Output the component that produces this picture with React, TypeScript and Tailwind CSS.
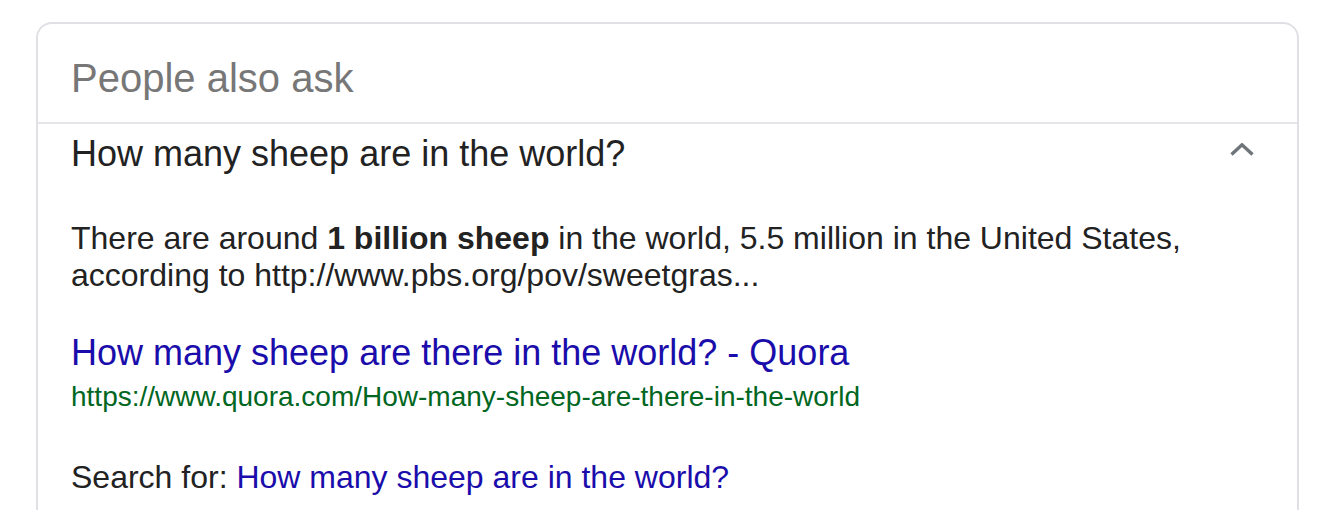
import { useState } from 'react'

const font = { fontFamily: '"Liberation Sans", Arial, sans-serif' }

const ChevronUp = () => (
  <svg width="24" height="13" viewBox="0 0 24 13" fill="none">
    <path d="M1.5 11.5L12 1.8L22.5 11.5" stroke="#70757a" strokeWidth="3.4" />
  </svg>
)

export default function App() {
  const [open, setOpen] = useState(true)

  return (
    <div className="min-h-[510px] bg-white pt-[22px] pl-[36px]" style={font}>
      <div className="w-[1263px] h-[600px] rounded-[16px] border-2 border-[#dfe1e5] bg-white">
        <div className="h-[100px] border-b-2 border-[#e4e6ea] pl-[33px] pt-[32px]">
          <h2 className="text-[40px] leading-[44px] text-[#777777]">People also ask</h2>
        </div>

        <div className="pl-[33px] pr-[43px]">
          <button
            onClick={() => setOpen(!open)}
            className="flex w-full items-start justify-between pt-[10px] text-left"
          >
            <span className="text-[36px] leading-[40px] text-[#222222]">How many sheep are in the world?</span>
            <span className="mt-[9px] block">
              <ChevronUp />
            </span>
          </button>

          {open && (
            <div className="pt-[46px]">
              <p className="text-[32px] leading-[37px] text-[#222222]">
                There are around <b>1 billion sheep</b> in the world, 5.5 million in the United States,
                <br />
                according to http://www.pbs.org/pov/sweetgras...
              </p>

              <div className="pt-[39px]">
                <a href="#" className="block text-[36px] leading-[40px] text-[#1a0dab]">
                  How many sheep are there in the world? - Quora
                </a>
                <div className="mt-[9px] text-[28px] leading-[30px] text-[#006621]">
                  https://www.quora.com/How-many-sheep-are-there-in-the-world
                </div>
              </div>

              <div className="pt-[47px] text-[32px] leading-[37px] text-[#222222]">
                Search for: <a href="#" className="text-[#1a0dab]">How many sheep are in the world?</a>
              </div>
            </div>
          )}
        </div>
      </div>
    </div>
  )
}
